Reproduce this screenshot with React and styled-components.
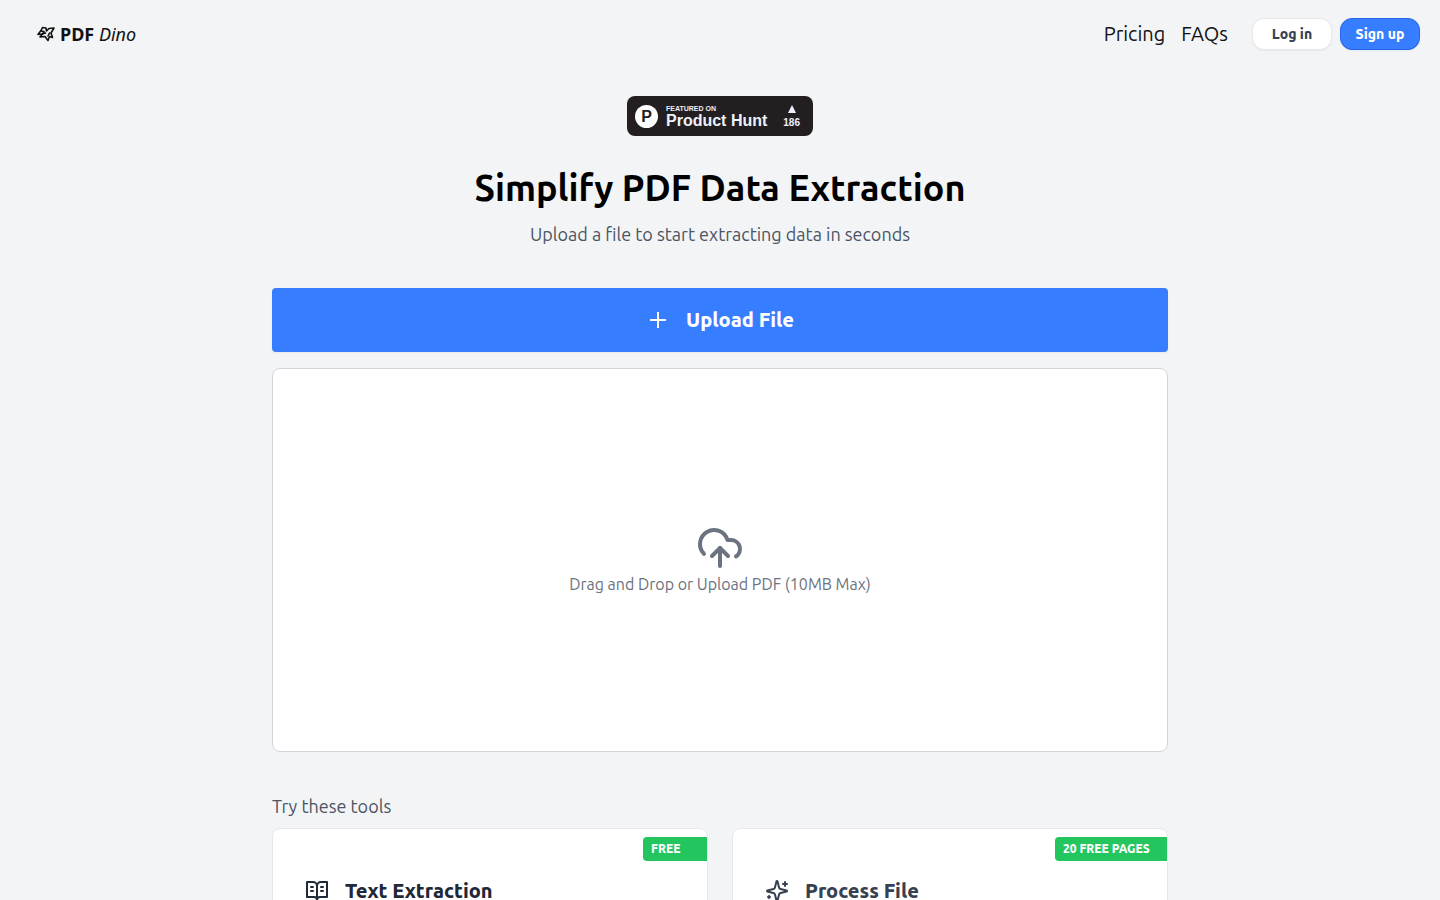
import React from 'react'
import styled, { createGlobalStyle } from 'styled-components'

const App = () => {
  return (
    <>
      <GlobalStyle />
      <Header>
        <Logo href="/">
          <DinoIcon />
          <LogoText>
            <b>PDF</b> <i>Dino</i>
          </LogoText>
        </Logo>
        <Navigation>
          <Nav href="/pricing">Pricing</Nav>
          <Nav href="/faqs">FAQs</Nav>
          <Actions>
            <Button type="button">Log in</Button>
            <Button type="button" $primary>Sign up</Button>
          </Actions>
        </Navigation>
      </Header>
      <Main>
        <HuntBadge href="/product-hunt">
          <HuntMark>P</HuntMark>
          <HuntText>
            <HuntSmall>FEATURED ON</HuntSmall>
            <HuntName>Product Hunt</HuntName>
          </HuntText>
          <HuntVotes>
            <svg width="8" height="8" viewBox="0 0 8 8" fill="currentColor">
              <path d="M4 0l4 8H0z" />
            </svg>
            <span>186</span>
          </HuntVotes>
        </HuntBadge>
        <Title>Simplify PDF Data Extraction</Title>
        <Subtitle>Upload a file to start extracting data in seconds</Subtitle>
        <UploadButton type="button">
          <PlusIcon />
          Upload File
        </UploadButton>
        <DropZone type="button">
          <CloudIcon />
          Drag and Drop or Upload PDF (10MB Max)
        </DropZone>
        <ToolsTitle>Try these tools</ToolsTitle>
        <Tools>
          <Card href="/text-extraction">
            <Tag>FREE</Tag>
            <CardTitle $dark>
              <BookIcon />
              Text Extraction
            </CardTitle>
          </Card>
          <Card href="/process-file">
            <Tag $wide>20 FREE PAGES</Tag>
            <CardTitle>
              <SparklesIcon />
              Process File
            </CardTitle>
          </Card>
        </Tools>
      </Main>
    </>
  )
}

export default App

const DinoIcon = () => (
  <svg width="18" height="18" viewBox="0 0 18 18" fill="none" stroke="currentColor" strokeWidth="1.6" strokeLinejoin="round" strokeLinecap="round">
    <path d="M1 9.500L4 5.500 5.500 2.500 9 3l.5 3 2.500-2.500 5-.5-3 5 1.500 4.500-3-1L11 15.500 8 11.500l-5 .5 2.500-3z" />
    <path d="M4 6l3 .5L5.500 9l3-1M12.500 8L11 11" />
  </svg>
)

const PlusIcon = () => (
  <svg width="24" height="24" viewBox="0 0 24 24" fill="none" stroke="currentColor" strokeWidth="2">
    <path d="M12 4v16M4 12h16" />
  </svg>
)

const CloudIcon = () => (
  <svg width="48" height="48" viewBox="0 0 24 24" fill="none" stroke="currentColor" strokeWidth="2" strokeLinecap="round" strokeLinejoin="round">
    <path d="M4 14.899A7 7 0 1 1 15.71 8h1.79a4.500 4.500 0 0 1 2.500 8.242" />
    <path d="M12 12v9" />
    <path d="m16 16-4-4-4 4" />
  </svg>
)

const BookIcon = () => (
  <svg width="24" height="24" viewBox="0 0 24 24" fill="none" stroke="currentColor" strokeWidth="2" strokeLinecap="round" strokeLinejoin="round">
    <path d="M2 3h6a4 4 0 0 1 4 4v14a3 3 0 0 0-3-3H2z" />
    <path d="M22 3h-6a4 4 0 0 0-4 4v14a3 3 0 0 1 3-3h7z" />
    <path d="M6 8h2M6 12h2M16 8h2M16 12h2" />
  </svg>
)

const SparklesIcon = () => (
  <svg width="24" height="24" viewBox="0 0 24 24" fill="none" stroke="currentColor" strokeWidth="2" strokeLinecap="round" strokeLinejoin="round">
    <path d="M9.937 15.500A2 2 0 0 0 8.500 14.063l-6.135-1.582a.5.5 0 0 1 0-.962L8.500 9.936A2 2 0 0 0 9.937 8.500l1.582-6.135a.5.5 0 0 1 .963 0L14.063 8.500A2 2 0 0 0 15.500 9.937l6.135 1.581a.5.5 0 0 1 0 .964L15.500 14.063a2 2 0 0 0-1.437 1.437l-1.582 6.135a.5.5 0 0 1-.963 0z" />
    <path d="M20 3v4M22 5h-4M4 17v2M5 18H3" />
  </svg>
)

const GlobalStyle = createGlobalStyle`
* {
  box-sizing: border-box;
}
body {
  margin: 0;
  background-color: #f3f4f6;
  color: #111;
  font-family: Ubuntu, "Noto Sans", sans-serif;
  font-size: 16px;
  line-height: 24px;
}
a {
  color: inherit;
  text-decoration: none;
}
button {
  font-family: inherit;
  cursor: pointer;
}
`
const Header = styled.header`
display: flex;
align-items: center;
justify-content: space-between;
height: 68px;
padding: 0 20px 0 37px;
`
const Logo = styled.a`
display: flex;
align-items: center;
gap: 5px;
`
const LogoText = styled.span`
font-family: "Noto Sans", sans-serif;
font-size: 18px;
line-height: 28px;
b {
  font-weight: 700;
}
`
const Navigation = styled.nav`
display: flex;
align-items: center;
gap: 16px;
`
const Nav = styled.a`
font-size: 20px;
line-height: 28px;
`
const Actions = styled.div`
display: flex;
gap: 8px;
margin-left: 8px;
`
const Button = styled.button`
width: 80px;
height: 32px;
padding: 0;
border: 1px solid ${p => (p.$primary ? '#2563eb' : '#e5e7eb')};
border-radius: 12px;
background-color: ${p => (p.$primary ? '#377dff' : '#fff')};
color: ${p => (p.$primary ? '#fff' : '#374151')};
font-size: 14px;
font-weight: 800;
box-shadow: 0 1px 2px rgba(0, 0, 0, 0.05);
`
const Main = styled.main`
display: flex;
flex-direction: column;
max-width: 896px;
margin: 0 auto;
padding: 28px 0 48px;
`
const HuntBadge = styled.a`
display: flex;
align-items: center;
align-self: center;
width: 186px;
height: 40px;
padding: 1px 13px 0 8px;
border-radius: 8px;
background-color: #231f20;
color: #eef0fb;
font-family: "Liberation Sans", sans-serif;
font-weight: 700;
`
const HuntMark = styled.span`
display: flex;
align-items: center;
justify-content: center;
width: 23px;
height: 23px;
border-radius: 50%;
background-color: #fff;
color: #231f20;
font-size: 16px;
`
const HuntText = styled.span`
display: flex;
flex-direction: column;
flex: 1;
margin-left: 8px;
white-space: nowrap;
`
const HuntSmall = styled.span`
font-size: 7px;
line-height: 8px;
`
const HuntName = styled.span`
font-size: 16px;
line-height: 16px;
`
const HuntVotes = styled.span`
display: flex;
flex-direction: column;
align-items: center;
gap: 4px;
font-size: 10px;
line-height: 11px;
`
const Title = styled.h1`
margin: 32px 0 0;
color: #000;
font-size: 36px;
font-weight: 600;
line-height: 40px;
text-align: center;
`
const Subtitle = styled.p`
margin: 12px 0 0;
color: #4b5563;
font-size: 18px;
line-height: 28px;
text-align: center;
`
const UploadButton = styled.button`
display: flex;
align-items: center;
justify-content: center;
gap: 16px;
height: 64px;
margin-top: 40px;
border: 0;
border-radius: 4px;
background-color: #377dff;
color: #fff;
font-size: 20px;
font-weight: 800;
line-height: 28px;
box-shadow: 0 1px 2px rgba(0, 0, 0, 0.05);
`
const DropZone = styled.button`
display: flex;
flex-direction: column;
align-items: center;
justify-content: center;
height: 384px;
margin-top: 16px;
border: 1px solid #d1d5db;
border-radius: 8px;
background-color: #fff;
color: #6b7280;
font-size: 16px;
line-height: 24px;
`
const ToolsTitle = styled.h2`
margin: 40px 0 8px;
color: #4b5563;
font-size: 18px;
font-weight: 400;
line-height: 28px;
`
const Tools = styled.div`
display: grid;
grid-template-columns: 1fr 1fr;
gap: 24px;
`
const Card = styled.a`
display: flex;
flex-direction: column;
min-height: 160px;
padding: 8px 0 32px;
border: 1px solid #e5e7eb;
border-radius: 8px;
background-color: #fff;
`
const Tag = styled.span`
align-self: flex-end;
width: ${p => (p.$wide ? '112px' : '64px')};
padding: 0 8px;
border-radius: 4px 0 0 4px;
background-color: #22c55e;
color: #fff;
font-size: 12px;
font-weight: 800;
line-height: 24px;
white-space: nowrap;
`
const CardTitle = styled.h3`
display: flex;
align-items: center;
gap: 16px;
margin: 16px 32px 0;
color: ${p => (p.$dark ? '#1f2937' : '#374151')};
font-size: 20px;
font-weight: 800;
line-height: 28px;
`
